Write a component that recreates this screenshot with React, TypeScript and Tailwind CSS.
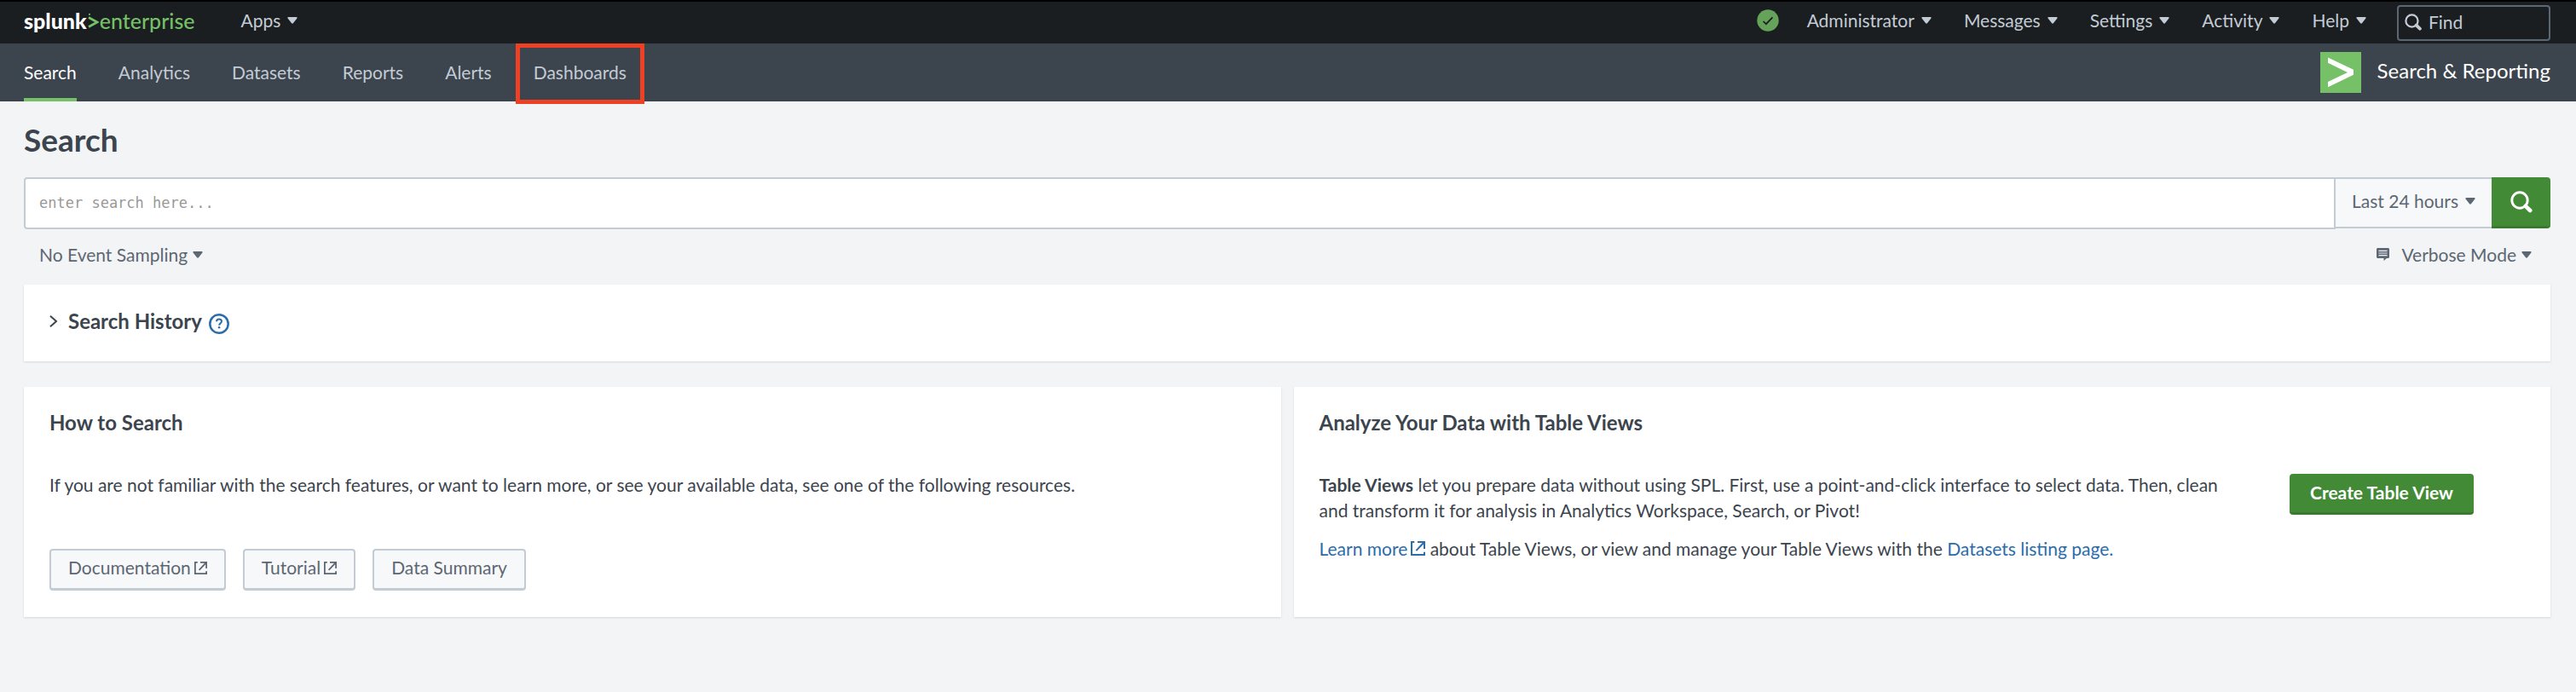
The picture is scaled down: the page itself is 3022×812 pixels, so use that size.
import React from "react";

function Caret({ className = "" }: { className?: string }) {
  return (
    <svg viewBox="0 0 12 8" className={`h-2 w-3 shrink-0 ${className}`} fill="currentColor" aria-hidden="true">
      <path d="M1.3 0h9.4c.9 0 1.3.9.7 1.5L6.9 7.3c-.5.6-1.3.6-1.8 0L.6 1.5C0 .9.4 0 1.3 0z" />
    </svg>
  );
}

function SearchGlyph({ className = "", handle = 4.6 }: { className?: string; handle?: number }) {
  return (
    <svg viewBox="0 0 26 26" className={`shrink-0 ${className}`} fill="none" stroke="currentColor" aria-hidden="true">
      <circle cx="11" cy="11" r="9.2" strokeWidth="2.9" />
      <path d="M17.8 17.8l5.4 5.2" strokeWidth={handle} strokeLinecap="round" />
    </svg>
  );
}

function External({ className = "" }: { className?: string }) {
  return (
    <svg viewBox="0 0 16 16" className={`shrink-0 ${className}`} fill="none" stroke="currentColor" strokeWidth="1.9" aria-hidden="true">
      <path d="M4 .95H.95v14.1h14.1V12" />
      <path d="M7.5 .95h7.55V8.5M14.8 1.2L6 10.5" />
    </svg>
  );
}

const topMenus = ["Administrator", "Messages", "Settings", "Activity", "Help"];
const tabs = ["Search", "Analytics", "Datasets", "Reports", "Alerts", "Dashboards"];

function TopBar() {
  return (
    <header className="flex h-[51px] items-center border-t-2 border-black bg-[#1a1e21] pr-[30px] pl-7 text-[#c3cbd4]">
      <a href="#home" className="flex items-center pb-[6px] text-[25px] leading-8 text-[#76c067]">
        <span className="font-black text-white">splunk</span>
        <svg viewBox="0 0 13 18" className="mx-px h-[18px] w-[13px]" fill="none" stroke="currentColor" aria-hidden="true">
          <path d="M1 5.5L11 11L1 16.500" strokeWidth="2.6" />
          <circle cx="2" cy="1.8" r="1.1" fill="currentColor" stroke="none" />
        </svg>
        <span className="font-medium">enterprise</span>
      </a>
      <button className="ml-[54px] flex items-center gap-2 pb-[6px]">
        Apps <Caret />
      </button>
      <div className="ml-auto flex items-center">
        <svg viewBox="0 0 26 26" className="mr-[33px] mb-[6px] h-[26px] w-[26px]" role="img" aria-label="Health: OK">
          <circle cx="13" cy="13" r="12.7" fill="#65a35b" />
          <path d="M7.5 14l3.4 3.2 7.5-7.9" fill="none" stroke="#1a1e21" strokeWidth="1.7" />
        </svg>
        <nav className="flex items-center gap-[38px] pb-[6px]">
          {topMenus.map((m) => (
            <button key={m} className="flex items-center gap-2">
              {m} <Caret />
            </button>
          ))}
        </nav>
        <label className="ml-9 flex h-[42px] w-[180px] items-center gap-2 rounded border-2 border-[#5c6773] px-[7px] pb-[2px]">
          <SearchGlyph className="h-5 w-5" handle={5} />
          <input aria-label="Find" placeholder="Find" className="w-full min-w-0 bg-transparent outline-none placeholder:text-[#c3cbd4]" />
        </label>
      </div>
    </header>
  );
}

function AppBar() {
  return (
    <div className="flex h-[68px] items-stretch justify-between bg-[#3c444d] pr-[30px] pl-7">
      <nav className="flex gap-[49px]">
        {tabs.map((t) => (
          <a
            key={t}
            href={`#${t.toLowerCase()}`}
            className={`relative flex items-center border-y-4 border-transparent ${t === "Search" ? "border-b-[#76c067] text-white" : "text-[#c3cbd4]"}`}
          >
            {t}
            {t === "Dashboards" && (
              <span className="pointer-events-none absolute -inset-x-[21px] -top-1 -bottom-[7px] border-[5px] border-[#ee4024]" />
            )}
          </a>
        ))}
      </nav>
      <a href="#app" className="flex items-center gap-[19px] text-2xl text-white">
        <svg viewBox="0 0 48 48" className="h-12 w-12" aria-hidden="true">
          <path fill="#76c067" d="M0 0h48v48H0z" />
          <path fill="#fff" d="M9 6.5l30 14.3v6L9 41.300v-6.200l23-11.200L9 12.800z" />
        </svg>
        <span className="pb-1">Search &amp; Reporting</span>
      </a>
    </div>
  );
}

function SearchBar() {
  return (
    <form className="flex items-start" onSubmit={(e) => e.preventDefault()}>
      <input
        aria-label="Search query"
        placeholder="enter search here..."
        className="h-[61px] min-w-0 flex-1 rounded-l border-2 border-[#c3cbd4] bg-white px-4 pb-[2px] font-['DejaVu_Sans_Mono',monospace] text-[17px] outline-none placeholder:text-[#999999]"
      />
      <button type="button" className="flex h-[60px] w-[183px] items-center justify-center gap-2 border-y-2 border-[#c3cbd4] bg-[#f7f8fa] pb-1 text-[#5c6773]">
        Last 24 hours <Caret />
      </button>
      <button aria-label="Run search" className="flex h-[60px] w-[69px] items-center justify-center rounded-r border-b-[3px] border-[#3a7a30] bg-[#438a37] text-white">
        <SearchGlyph className="h-[26px] w-[26px]" />
      </button>
    </form>
  );
}

const panel = "bg-white shadow-[0_1px_2px_rgba(60,68,77,0.15)]";
const outlined =
  "flex h-[49px] items-center gap-1 rounded border-2 border-b-[3px] border-[#c3cbd4] bg-[#f7f8fa] px-5 pb-1 text-[#5c6773]";

export default function App() {
  return (
    <div className="min-h-screen bg-[#f2f4f5] font-['Lato',sans-serif] text-[21px] leading-[30px] text-[#3c444d]">
      <TopBar />
      <AppBar />
      <main className="pr-[30px] pl-7">
        <h1 className="pt-[21px] pb-5 text-[37px] leading-[48px] font-bold">Search</h1>
        <SearchBar />
        <div className="flex h-[65px] items-center justify-between pr-[22px] pb-[6px] pl-[18px] text-[#5c6773]">
          <button className="flex items-center gap-[6px]">
            No Event Sampling <Caret />
          </button>
          <button className="flex items-center gap-[6px]">
            <svg viewBox="0 0 15 15" className="mr-2 h-[15px] w-[15px]" aria-hidden="true">
              <path fill="currentColor" d="M1.5 0h12c.8 0 1.5.7 1.5 1.5v9c0 .8-.7 1.5-1.5 1.5H12l-3.5 3v-3h-7C.7 12 0 11.3 0 10.5v-9C0 .7.7 0 1.5 0z" />
              <path stroke="#f2f4f5" strokeWidth="1.2" d="M2.500 3.400h10M2.500 6h10M2.500 8.600h10" />
            </svg>
            Verbose Mode <Caret />
          </button>
        </div>

        <section className={`${panel} flex h-[90px] items-center px-[30px] pb-1`}>
          <button className="flex items-center text-2xl font-bold">
            <svg viewBox="0 0 10 14" className="mr-3 h-[14px] w-[10px]" fill="none" stroke="currentColor" strokeWidth="2" aria-hidden="true">
              <path d="M1 .8l7 6.200-7 6.200" />
            </svg>
            Search History
          </button>
          <a href="#help" aria-label="Help on search history" className="mt-[6px] ml-2 text-[#2b6cab]">
            <svg viewBox="0 0 24 24" className="h-6 w-6" fill="none" stroke="currentColor" aria-hidden="true">
              <circle cx="12" cy="12" r="10.7" strokeWidth="2.5" />
              <path d="M9 9.300c.1-1.800 1.300-2.900 3-2.900s3 1 3 2.500c0 2.300-2.800 2.300-2.800 4.800" strokeWidth="2" />
              <circle cx="12.1" cy="16.3" r="1.3" fill="currentColor" stroke="none" />
            </svg>
          </a>
        </section>

        <div className="mt-[30px] grid grid-cols-2 gap-[15px]">
          <section className={`${panel} min-h-[270px] px-[30px] pt-[27px]`}>
            <h2 className="text-2xl leading-[30px] font-bold">How to Search</h2>
            <p className="mt-[43px]">
              If you are not familiar with the search features, or want to learn more, or see your available data, see one of the following resources.
            </p>
            <div className="mt-[60px] flex gap-5">
              <a href="#documentation" className={outlined}>
                Documentation <External className="h-[15px] w-[15px]" />
              </a>
              <a href="#tutorial" className={outlined}>
                Tutorial <External className="h-[15px] w-[15px]" />
              </a>
              <button className={outlined}>Data Summary</button>
            </div>
          </section>

          <section className={`${panel} min-h-[270px] px-[30px] pt-[27px]`}>
            <h2 className="text-2xl leading-[30px] font-bold">Analyze Your Data with Table Views</h2>
            <div className="mt-[43px] flex items-start justify-between">
              <div className="max-w-[1070px]">
                <p>
                  <strong>Table Views</strong> let you prepare data without using SPL. First, use a point-and-click interface to select data. Then, clean and transform it for analysis in Analytics Workspace, Search, or Pivot!
                </p>
                <p className="mt-[15px]">
                  <a href="#learn" className="text-[#2b6cab]">
                    Learn more
                    <External className="ml-1 inline-block h-[17px] w-[17px] align-baseline" />
                  </a>{" "}
                  about Table Views, or view and manage your Table Views with the{" "}
                  <a href="#datasets-listing" className="text-[#2b6cab]">Datasets listing page.</a>
                </p>
              </div>
              <button className="mt-[2px] mr-[60px] h-12 w-[216px] shrink-0 rounded border-b-[3px] border-[#3a7a30] bg-[#438a37] pb-[2px] font-bold text-white">
                Create Table View
              </button>
            </div>
          </section>
        </div>
      </main>
    </div>
  );
}
